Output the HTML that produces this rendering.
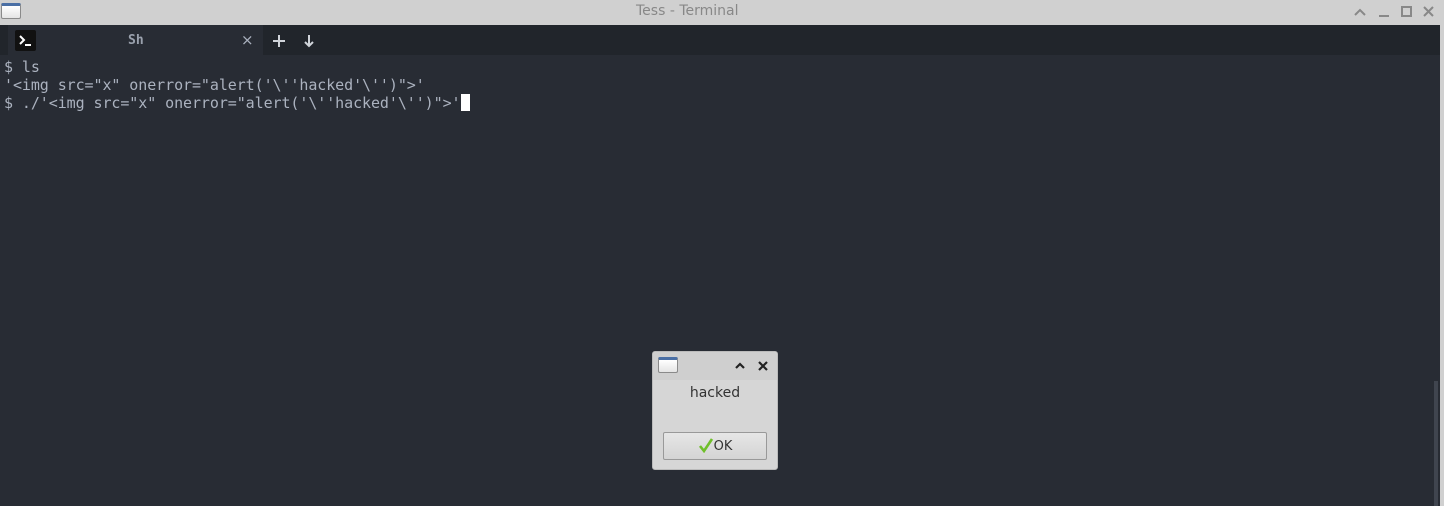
<!DOCTYPE html>
<html><head><style>
*{margin:0;padding:0;box-sizing:border-box}
body{width:1444px;height:506px;overflow:hidden;background:#282c34;position:relative;font-family:"DejaVu Sans","Liberation Sans",sans-serif}
#title{position:absolute;left:0;top:0;width:1444px;height:25px;background:#d0d0d0}
#tt{position:absolute;left:636px;top:3px;color:#888;font-size:14px;white-space:nowrap}
.wicon{position:absolute;background:linear-gradient(#fff,#e4e4e4);border:1px solid #8a8a8a;border-top:3px solid #4a6fa5;border-radius:2px}
#tabs{position:absolute;left:0;top:25px;width:1440px;height:30px;background:#21252b}
#tab{position:absolute;left:8px;top:0;width:255px;height:30px;background:#282c34}
#term{position:absolute;left:4px;top:58px;font-family:"DejaVu Sans Mono",monospace;font-size:15px;letter-spacing:-0.08px;line-height:18px;color:#abb2bf;white-space:pre}
.cur{display:inline-block;width:9px;height:17px;background:#fff;vertical-align:-3px}
#rb{position:absolute;right:0;top:25px;width:4px;height:481px;background:#d0d0d0}
#thumb{position:absolute;left:1434px;top:381px;width:4px;height:125px;background:#40454f}
#dlg{position:absolute;left:652px;top:351px;width:126px;height:119px;background:#d6d6d6;border:1px solid #bbb;border-radius:3px}
#btn{position:absolute;left:10px;top:80px;width:104px;height:28px;border:1px solid #999;border-radius:2px;background:linear-gradient(#e6e6e6,#d4d4d4);font-size:13px;color:#333;text-align:center;line-height:27px}
</style></head><body>
<div id="title"><span id="tt">Tess - Terminal</span></div>
<div class="wicon" style="left:1px;top:3px;width:20px;height:16px"></div>
<svg style="position:absolute;left:1350px;top:4px" width="94" height="16" fill="none" stroke="#888" stroke-width="2">
<path d="M5 11l5-5 5 5"/><path d="M29 12h10"/><rect x="52" y="3" width="9" height="9"/><path d="M74 3l9 9M83 3l-9 9"/></svg>
<div id="tabs"><div id="tab">
<div style="position:absolute;left:7px;top:5px;width:21px;height:21px;background:#111;border-radius:2px"><svg width="21" height="21" stroke="#fff" stroke-width="2" fill="none"><path d="M5 6l4 4-4 4M10 15h6"/></svg></div>
<div style="position:absolute;left:120px;top:8px;font-family:'DejaVu Sans Mono',monospace;font-size:13px;font-weight:bold;color:#9aa1ad">Sh</div>
<div style="position:absolute;left:233px;top:6px;font-size:15px;color:#abb2bf">×</div>
</div>
<svg style="position:absolute;left:270px;top:8px" width="50" height="16" stroke="#d0d4da" stroke-width="2" fill="none"><path d="M9 2v12M3 8h12"/><path d="M39 2v11M35 9l4 4 4-4"/></svg>
</div>
<div id="term">$ ls
'&lt;img src="x" onerror="alert('\''hacked'\'')"&gt;'
$ ./'&lt;img src="x" onerror="alert('\''hacked'\'')"&gt;'<span class="cur"></span></div>
<div id="thumb"></div>
<div id="rb"></div>
<div id="dlg">
<div style="position:absolute;left:0;top:0;width:124px;height:28px;background:#cfcfcf;border-radius:3px 3px 0 0"></div>
<div class="wicon" style="left:5px;top:5px;width:20px;height:16px"></div>
<svg style="position:absolute;left:80px;top:7px" width="40" height="14" stroke="#222" stroke-width="2.2" fill="none"><path d="M3 9l4-4 4 4"/><path d="M26 3l8 8M34 3l-8 8"/></svg>
<div style="position:absolute;left:0;top:33px;width:124px;text-align:center;font-size:14px;color:#333">hacked</div>
<div id="btn"><svg width="16" height="16" style="vertical-align:-3px" fill="none"><path d="M2 9l4 5L14 2" stroke="#6fbf2a" stroke-width="2.6"/></svg>OK</div>
</div>
</body></html>
